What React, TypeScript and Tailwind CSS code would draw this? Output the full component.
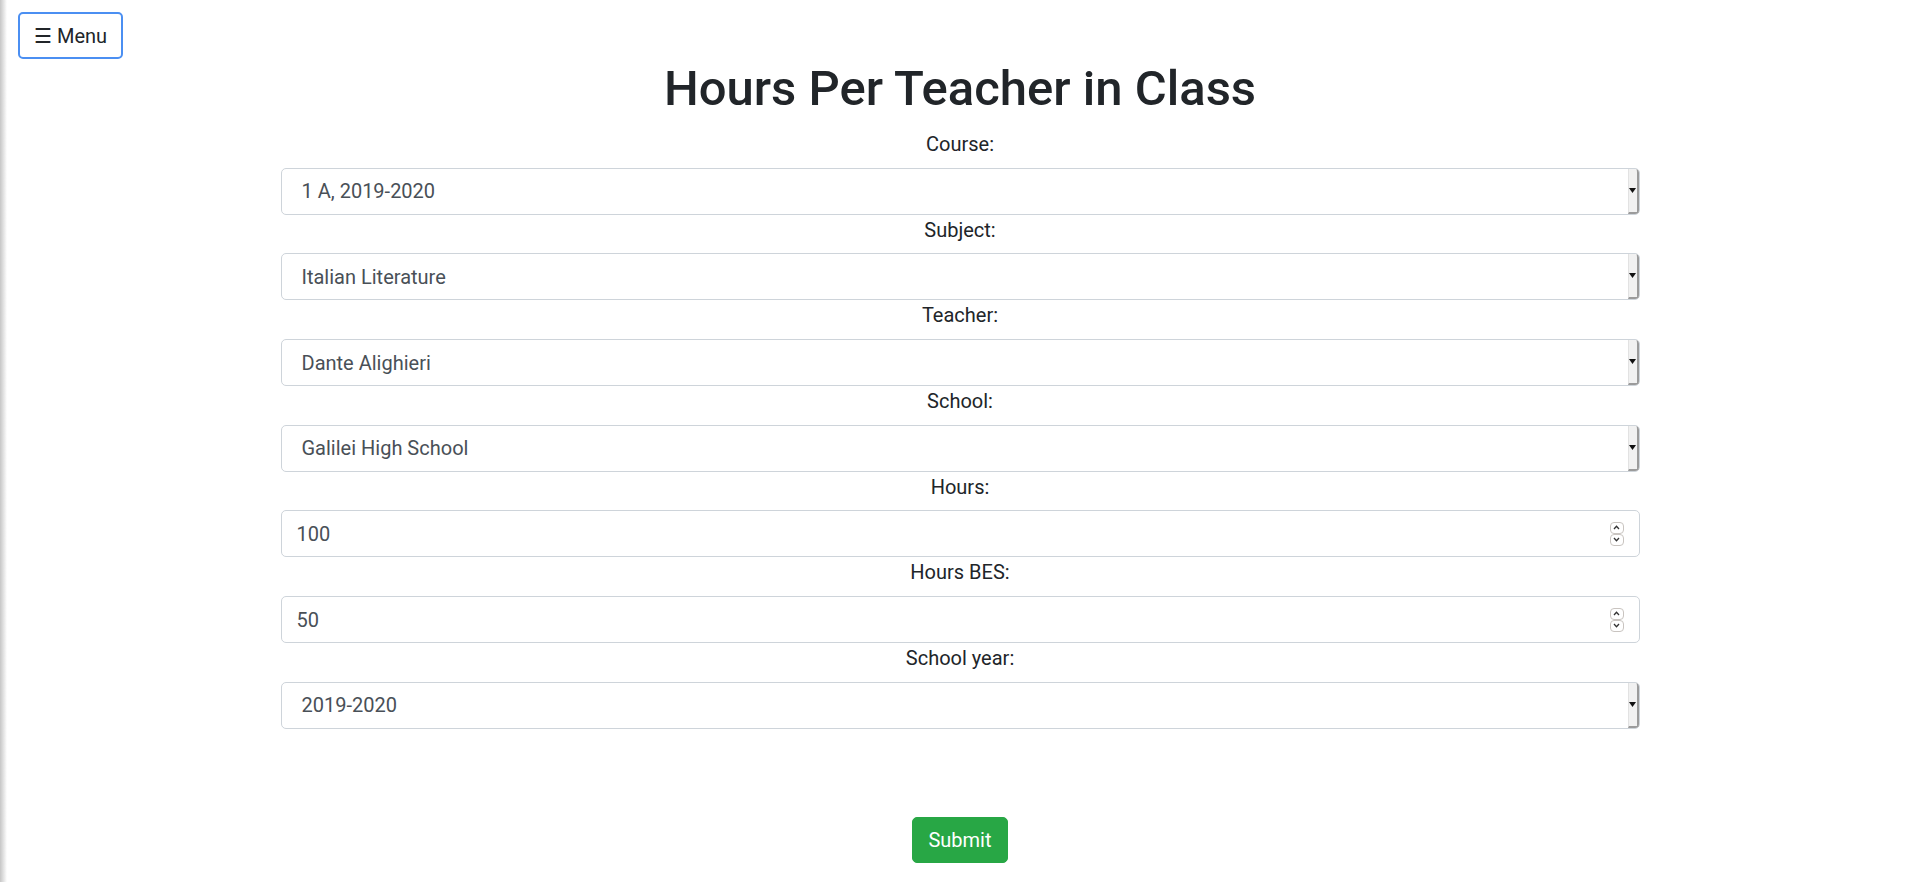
import React from 'react';

type Field = { label: string; value: string; kind: 'select' | 'number' };

const fields: Field[] = [
    { label: 'Course:', value: '1 A, 2019-2020', kind: 'select' },
    { label: 'Subject:', value: 'Italian Literature', kind: 'select' },
    { label: 'Teacher:', value: 'Dante Alighieri', kind: 'select' },
    { label: 'School:', value: 'Galilei High School', kind: 'select' },
    { label: 'Hours:', value: '100', kind: 'number' },
    { label: 'Hours BES:', value: '50', kind: 'number' },
    { label: 'School year:', value: '2019-2020', kind: 'select' },
];

function SelectBox({ value }: { value: string }) {
    return (
        <div className="flex h-[47px] items-stretch overflow-hidden rounded-[5px] border border-[#ced4da] bg-white">
            <div className="flex flex-1 items-center pl-[20px] text-[20px] text-[#495057]">{value}</div>
            <div className="flex w-[11px] items-center justify-center rounded-tr-[3px] border-r-2 border-b-2 border-l border-r-[#9b9b9b] border-b-[#9b9b9b] border-l-[#e2e2e2] bg-[#f1f1f1]">
                <svg width="7" height="5" viewBox="0 0 7 5">
                    <path d="M0 0 H7 L3.5 5 Z" fill="#111" />
                </svg>
            </div>
        </div>
    );
}

function NumberBox({ value }: { value: string }) {
    return (
        <div className="flex h-[47px] items-center rounded-[5px] border border-[#ced4da] bg-white pr-[15px] pl-[15px]">
            <div className="flex-1 text-[20px] text-[#495057]">{value}</div>
            <div className="flex flex-col">
                <div className="flex h-[12px] w-[14px] items-center justify-center rounded-[4px] border border-[#c9c4c0]">
                    <svg width="7" height="5" viewBox="0 0 7 5">
                        <path d="M1 4 L3.5 1.3 L6 4" fill="none" stroke="#333" strokeWidth="1.3" />
                    </svg>
                </div>
                <div className="flex h-[12px] w-[14px] items-center justify-center rounded-[4px] border border-[#c9c4c0]">
                    <svg width="7" height="5" viewBox="0 0 7 5">
                        <path d="M1 1 L3.5 3.7 L6 1" fill="none" stroke="#333" strokeWidth="1.3" />
                    </svg>
                </div>
            </div>
        </div>
    );
}

export default function App() {
    return (
        <div className="min-h-screen bg-white font-['Roboto','Liberation_Sans',sans-serif] text-[#212529]">
            {/* edge of the collapsed side menu */}
            <div className="fixed top-0 left-0 h-full w-[7px] bg-linear-to-r from-[#c6c6c6] to-white" />

            <div className="pt-[12px] pl-[18px]">
                <button className="h-[47px] rounded-[5px] border-2 border-[#4b8ff2] bg-white px-[14px] text-[20px] leading-none text-[#212529]">
                    ☰ Menu
                </button>
            </div>

            <h1 className="text-center text-[49px] leading-[59px] font-medium text-[#212529]">
                Hours Per Teacher in Class
            </h1>

            <form className="mx-auto mt-[11px] w-[1359px]" onSubmit={(e) => e.preventDefault()}>
                {fields.map((f) => (
                    <div key={f.label}>
                        <label className="mb-[8.7px] block text-center text-[20px] leading-[30px]">{f.label}</label>
                        {f.kind === 'select' ? <SelectBox value={f.value} /> : <NumberBox value={f.value} />}
                    </div>
                ))}

                <div className="mt-[88px] flex justify-center">
                    <button
                        type="submit"
                        className="h-[46px] rounded-[5px] border border-[#28a745] bg-[#28a745] px-[15px] text-[20px] text-white"
                    >
                        Submit
                    </button>
                </div>
            </form>
        </div>
    );
}
